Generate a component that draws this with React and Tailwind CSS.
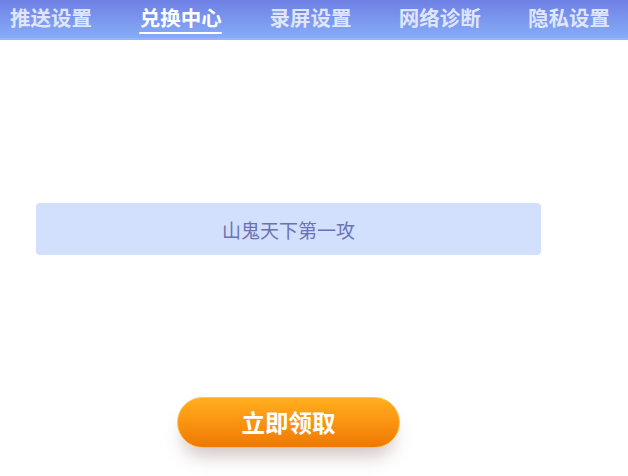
const TABS = ["推送设置", "兑换中心", "录屏设置", "网络诊断", "隐私设置"];

export default function App() {
  return (
    <div
      className="flex h-[476px] w-[628px] flex-col overflow-hidden bg-white"
      style={{ fontFamily: '"Noto Sans CJK SC", "Noto Sans", sans-serif' }}
    >
      {/* Tabs */}
      <div className="flex h-10 shrink-0 items-start justify-between border-b-2 border-[#93b6fa] bg-gradient-to-b from-[#6f80e4] to-[#86acf7] pl-[10px] pr-[18px]">
        {TABS.map((t, i) => (
          <div key={t} className="relative flex h-full flex-col items-center">
            <span
              className={`mt-[2px] text-[20.5px] font-bold leading-[30px] ${
                i === 1 ? "text-white" : "text-[#dfe5fb]"
              }`}
            >
              {t}
            </span>
            {i === 1 && <div className="h-[2px] w-[83px] rounded-full bg-white" />}
          </div>
        ))}
      </div>

      {/* Code box */}
      <div className="mt-[163px] pl-9">
        <div className="flex h-[52px] w-[505px] items-center justify-center rounded-[4px] bg-[#d2dffd]">
          <span className="text-[19px] leading-none text-[#6c73b4]">山鬼天下第一攻</span>
        </div>
      </div>

      {/* Button */}
      <div className="mt-[142px] flex pl-[177px]">
        <button className="flex h-[51px] w-[223px] items-center justify-center rounded-full border border-[#ffc24a] bg-gradient-to-b from-[#ffae1e] via-[#fa9410] to-[#ee7804] shadow-[0_14px_18px_-6px_rgba(120,90,80,0.35)]">
          <span className="text-[23.5px] font-bold leading-none text-white">立即领取</span>
        </button>
      </div>
    </div>
  );
}
